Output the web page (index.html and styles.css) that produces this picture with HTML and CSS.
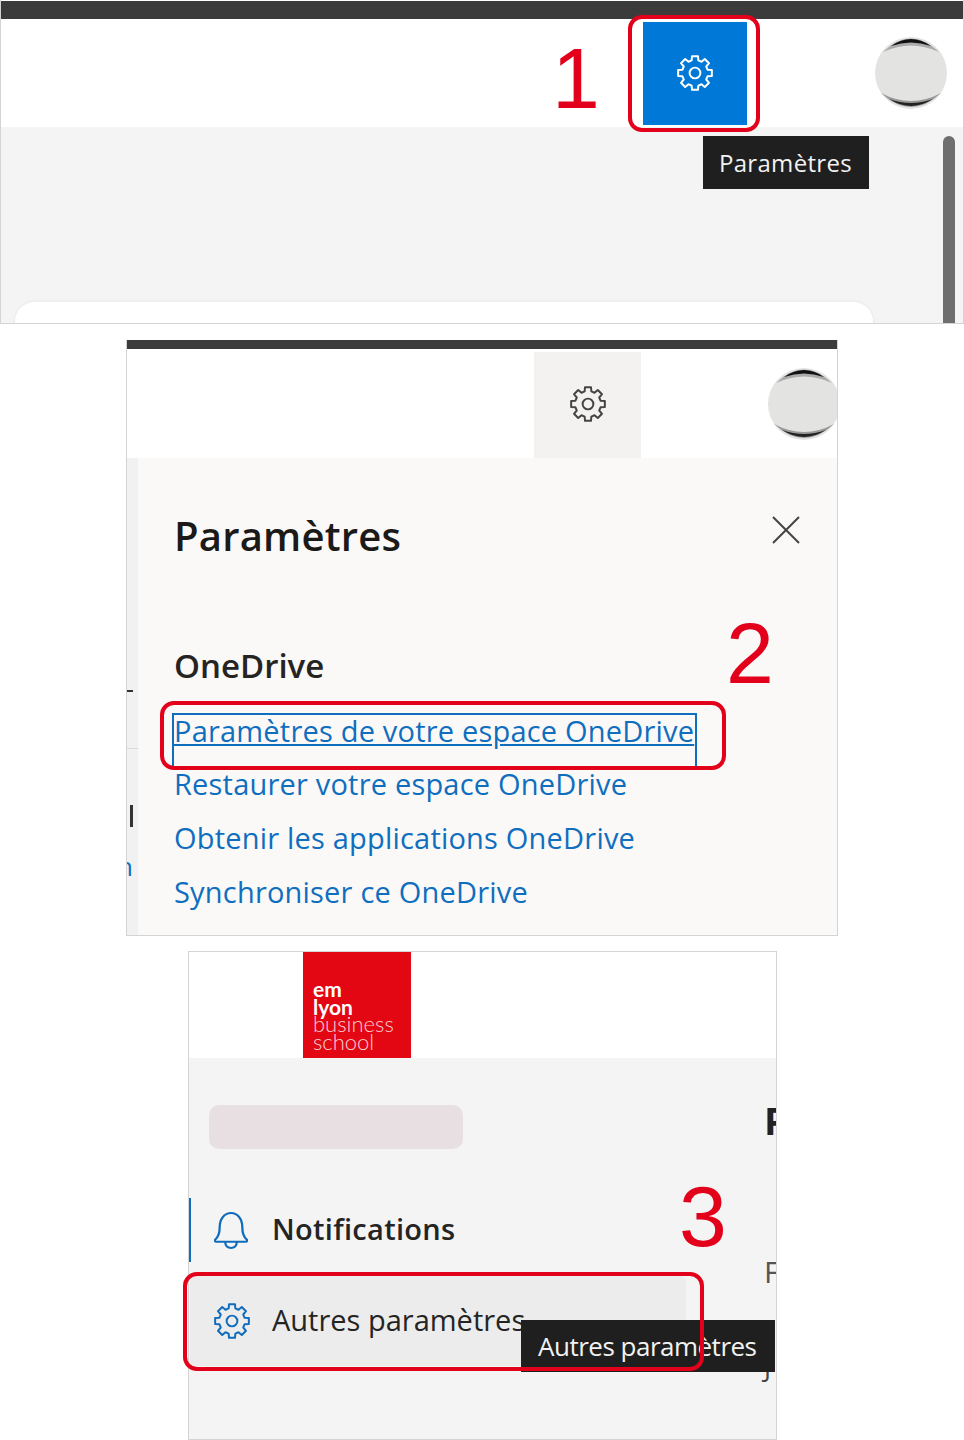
FILE: index.html
```html
<!DOCTYPE html>
<html lang="fr">
<head>
    <meta charset="utf-8">
    <title>Paramètres OneDrive</title>
    <link rel="stylesheet" href="styles.css">
</head>
<body>
    <svg class="defs" width="0" height="0">
        <symbol id="gear" viewBox="0 0 24 24">
            <polygon points="9.88,4.08 10.12,1.36 13.88,1.36 14.12,4.08 16.10,4.90 18.19,3.15 20.85,5.81 19.10,7.90 19.92,9.88 22.64,10.12 22.64,13.88 19.92,14.12 19.10,16.10 20.85,18.19 18.19,20.85 16.10,19.10 14.12,19.92 13.88,22.64 10.12,22.64 9.88,19.92 7.90,19.10 5.81,20.85 3.15,18.19 4.90,16.10 4.08,14.12 1.36,13.88 1.36,10.12 4.08,9.88 4.90,7.90 3.15,5.81 5.81,3.15 7.90,4.90"/>
            <circle cx="12" cy="12" r="3.4"/>
        </symbol>
        <symbol id="avatar" viewBox="0 0 72 72">
            <circle cx="36" cy="36" r="36" fill="#e3e3e2"/>
            <path d="M8 15 Q36 -12 64 15 Q36 2 8 15Z" fill="#aaa"/>
            <path d="M16 9 Q36 -5 56 9 Q36 2 16 9Z" fill="#111"/>
            <path d="M6 56 Q36 84 66 56 Q36 72 6 56Z" fill="#999"/>
            <path d="M14 62 Q36 76 58 62 Q36 70 14 62Z" fill="#222"/>
        </symbol>
    </svg>

    <!-- 1 -->
    <section class="shot shot-one">
        <div class="topbar"></div>
        <div class="header">
            <div class="tile tile-active">
                <svg class="gear"><use href="#gear"/></svg>
            </div>
            <svg class="avatar"><use href="#avatar"/></svg>
        </div>
        <div class="content">
            <div class="card"></div>
            <div class="scrollbar"></div>
        </div>
        <div class="tooltip tooltip-one">Paramètres</div>
        <div class="mark mark-one"></div>
        <div class="step step-one">1</div>
    </section>

    <!-- 2 -->
    <section class="shot shot-two">
        <div class="topbar"></div>
        <div class="header">
            <div class="tile tile-soft">
                <svg class="gear"><use href="#gear"/></svg>
            </div>
            <svg class="avatar"><use href="#avatar"/></svg>
        </div>
        <div class="body">
            <div class="strip">
                <span class="frag frag-dash"></span>
                <span class="frag frag-line"></span>
                <span class="frag frag-bar"></span>
                <span class="frag frag-h">h</span>
            </div>
            <div class="panel">
                <div class="panel-head">
                    <h1>Paramètres</h1>
                    <svg class="close" viewBox="0 0 28 28"><path d="M1 1 27 27M27 1 1 27"/></svg>
                </div>
                <h2>OneDrive</h2>
                <ul class="links">
                    <li><a class="focused">Paramètres de votre espace OneDrive</a></li>
                    <li><a>Restaurer votre espace OneDrive</a></li>
                    <li><a>Obtenir les applications OneDrive</a></li>
                    <li><a>Synchroniser ce OneDrive</a></li>
                </ul>
            </div>
        </div>
        <div class="mark mark-two"></div>
        <div class="step step-two">2</div>
    </section>

    <!-- 3 -->
    <section class="shot shot-three">
        <div class="brand">
            <div class="logo">
                <b>em</b>
                <b>lyon</b>
                <span>business</span>
                <span>school</span>
            </div>
        </div>
        <div class="side">
            <div class="pill"></div>
            <div class="nav-item nav-current">
                <svg class="nav-icon" viewBox="3 2 30 36" preserveAspectRatio="none"><path d="M4 29c3-3 4-6 4-12 0-8 4-14 10-14s10 6 10 14c0 6 1 9 4 12 1 1 0 2-1 2H5c-1 0-2-1-1-2ZM13 32c0 3 2 5 5 5s5-2 5-5"/></svg>
                <span>Notifications</span>
            </div>
            <div class="nav-item nav-hover">
                <svg class="gear"><use href="#gear"/></svg>
                <span>Autres paramètres</span>
            </div>
            <span class="frag frag-p">P</span>
            <span class="frag frag-f">F</span>
            <span class="frag frag-j">J</span>
        </div>
        <div class="tooltip tooltip-three">Autres paramètres</div>
        <div class="mark mark-three"></div>
        <div class="step step-three">3</div>
    </section>
</body>
</html>
```

FILE: styles.css
```css
body {
    font-family: "Open Sans", "Noto Sans", sans-serif;
    margin: 0;
    width: 964px;
    height: 1440px;
    overflow: hidden;
    background: #fff;
}
.defs {
    position: absolute;
}
.shot {
    position: relative;
    box-sizing: border-box;
    border: 1px solid #d4d4d4;
    background: #fff;
}
.shot-one {
    width: 964px;
    height: 324px;
    border-top: none;
    overflow: hidden;
}
.shot-two {
    width: 712px;
    height: 596px;
    margin: 16px 0 0 126px;
    border-top: none;
    overflow: hidden;
}
.shot-three {
    width: 589px;
    height: 489px;
    margin: 15px 0 0 188px;
}
.topbar {
    background: #3b3b3b;
}
.shot-one .topbar {
    height: 18px;
    margin-top: 1px;
}
.shot-two .topbar {
    height: 9px;
}
.header {
    display: flex;
    justify-content: flex-end;
    align-items: center;
}
.shot-one .header {
    height: 108px;
    padding-right: 16px;
}
.shot-two .header {
    height: 109px;
    margin-right: -3px;
}
.tile {
    display: flex;
    align-items: center;
    justify-content: center;
}
.tile-active {
    width: 104px;
    height: 103px;
    margin-right: 128px;
    background: #0078d7;
}
.tile-soft {
    width: 107px;
    height: 106px;
    margin: 3px 127px 0 0;
    background: #f3f2f1;
}
.tile-soft .gear {
    margin-top: -2px;
}
.gear {
    width: 38px;
    height: 38px;
    fill: none;
    stroke: #444;
    stroke-width: 1.25;
    stroke-linejoin: round;
}
.tile-active .gear {
    stroke: #fff;
}
.avatar {
    width: 72px;
    height: 72px;
}
.content {
    height: 196px;
    box-sizing: border-box;
    padding: 173px 88px 0 12px;
    background: #f4f4f4;
}
.card {
    height: 40px;
    background: #fff;
    border: 2px solid #efefef;
    border-radius: 22px 22px 0 0;
}
.scrollbar {
    position: absolute;
    top: 136px;
    right: 8px;
    width: 12px;
    height: 200px;
    background: #6e6e6e;
    border-radius: 6px 6px 0 0;
}
.tooltip {
    position: absolute;
    box-sizing: border-box;
    background: #1f1f1f;
    color: #f2f2f2;
    font-size: 24px;
    white-space: nowrap;
    display: flex;
    align-items: center;
}
.tooltip-one {
    left: 702px;
    top: 136px;
    width: 166px;
    height: 53px;
    padding-left: 16px;
    letter-spacing: 0.3px;
}
.tooltip-three {
    left: 332px;
    top: 368px;
    width: 254px;
    height: 52px;
    padding-left: 17px;
    font-size: 26px;
    letter-spacing: -0.5px;
}
.mark {
    position: absolute;
    box-sizing: border-box;
    border: 4px solid #e2001a;
    border-radius: 14px;
}
.mark-one {
    left: 627px;
    top: 15px;
    width: 132px;
    height: 117px;
}
.mark-two {
    left: 33px;
    top: 361px;
    width: 566px;
    height: 69px;
}
.mark-three {
    left: -6px;
    top: 320px;
    width: 521px;
    height: 99px;
}
.step {
    position: absolute;
    color: #e2001a;
    font-family: "Liberation Sans", Arial, sans-serif;
    font-size: 86px;
    line-height: 86px;
}
.step-one {
    left: 551px;
    top: 35px;
}
.step-two {
    left: 599px;
    top: 270px;
}
.step-three {
    left: 490px;
    top: 221px;
}
.body {
    display: flex;
    height: 477px;
}
.strip {
    position: relative;
    width: 11px;
    background: #f1f1f1;
    overflow: hidden;
}
.panel {
    flex: 1;
    padding: 0 0 0 36px;
    background: #faf9f8;
}
.panel-head {
    display: flex;
    justify-content: space-between;
    padding: 49px 37px 0 0;
}
h1 {
    margin: 0;
    font-size: 40px;
    line-height: 58px;
    font-weight: 600;
    letter-spacing: 0.2px;
    color: #1b1a19;
}
.close {
    width: 28px;
    height: 28px;
    margin-top: 9px;
    fill: none;
    stroke: #444;
    stroke-width: 2;
}
h2 {
    margin: 79px 0 0;
    font-size: 33px;
    line-height: 44px;
    font-weight: 600;
    color: #252423;
}
.links {
    list-style: none;
    margin: 15px 0 0;
    padding: 0;
}
.links li {
    height: 54px;
    line-height: 54px;
    font-size: 29px;
    letter-spacing: 0.2px;
    color: #106ebe;
    white-space: nowrap;
}
.links .focused {
    display: inline-block;
    height: 55px;
    box-sizing: border-box;
    line-height: 32px;
    margin: 10px 0 0 -2px;
    padding: 0 1px 0 0;
    border: 2px solid #106ebe;
    text-decoration: underline;
    vertical-align: top;
}
.frag {
    position: absolute;
    display: block;
}
.frag-dash {
    left: 0;
    top: 232px;
    width: 6px;
    height: 2px;
    background: #333;
}
.frag-line {
    left: 0;
    top: 290px;
    width: 11px;
    height: 1px;
    background: #d8d8d8;
}
.frag-bar {
    left: 3px;
    top: 347px;
    width: 3px;
    height: 22px;
    background: #333;
}
.frag-h {
    left: -10px;
    top: 390px;
    font-size: 26px;
    color: #106ebe;
}
.brand {
    height: 106px;
    padding-left: 114px;
}
.logo {
    display: flex;
    flex-direction: column;
    justify-content: flex-end;
    box-sizing: border-box;
    width: 108px;
    height: 106px;
    padding: 0 0 8px 10px;
    background: #e30613;
    color: #fff;
    font-family: "Lato", sans-serif;
    font-size: 21px;
    line-height: 17.5px;
}
.logo span {
    color: #f7cfd2;
    font-size: 22px;
    font-weight: 300;
}
.side {
    position: relative;
    height: 381px;
    box-sizing: border-box;
    padding-top: 47px;
    background: #f4f4f4;
    overflow: hidden;
}
.pill {
    width: 254px;
    height: 44px;
    margin-left: 20px;
    background: #e7dfe1;
    border-radius: 10px;
}
.nav-item {
    display: flex;
    align-items: center;
    font-size: 29px;
    color: #242424;
}
.nav-item span {
    margin-bottom: 4px;
}
.nav-current {
    gap: 24px;
    height: 64px;
    margin-top: 49px;
    border-left: 2px solid #106ebe;
    padding-left: 23px;
    font-weight: 600;
    letter-spacing: 0.3px;
}
.nav-hover {
    gap: 21px;
    width: 473px;
    height: 90px;
    margin: 14px 0 0 1px;
    padding-left: 23px;
    background: #ececec;
    border-radius: 6px;
}
.nav-hover .gear {
    stroke: #0f6cbd;
}
.nav-icon {
    width: 34px;
    height: 37px;
    fill: none;
    stroke: #0f6cbd;
    stroke-width: 2;
    stroke-linejoin: round;
}
.frag-p,
.frag-f,
.frag-j {
    left: 575px;
    margin: 0;
    font-size: 38px;
    line-height: 40px;
    color: #222;
}
.frag-p {
    top: 42px;
    font-weight: 700;
}
.frag-f {
    top: 194px;
    font-size: 30px;
    color: #555;
}
.frag-j {
    top: 289px;
    font-size: 26px;
    color: #444;
}
```
